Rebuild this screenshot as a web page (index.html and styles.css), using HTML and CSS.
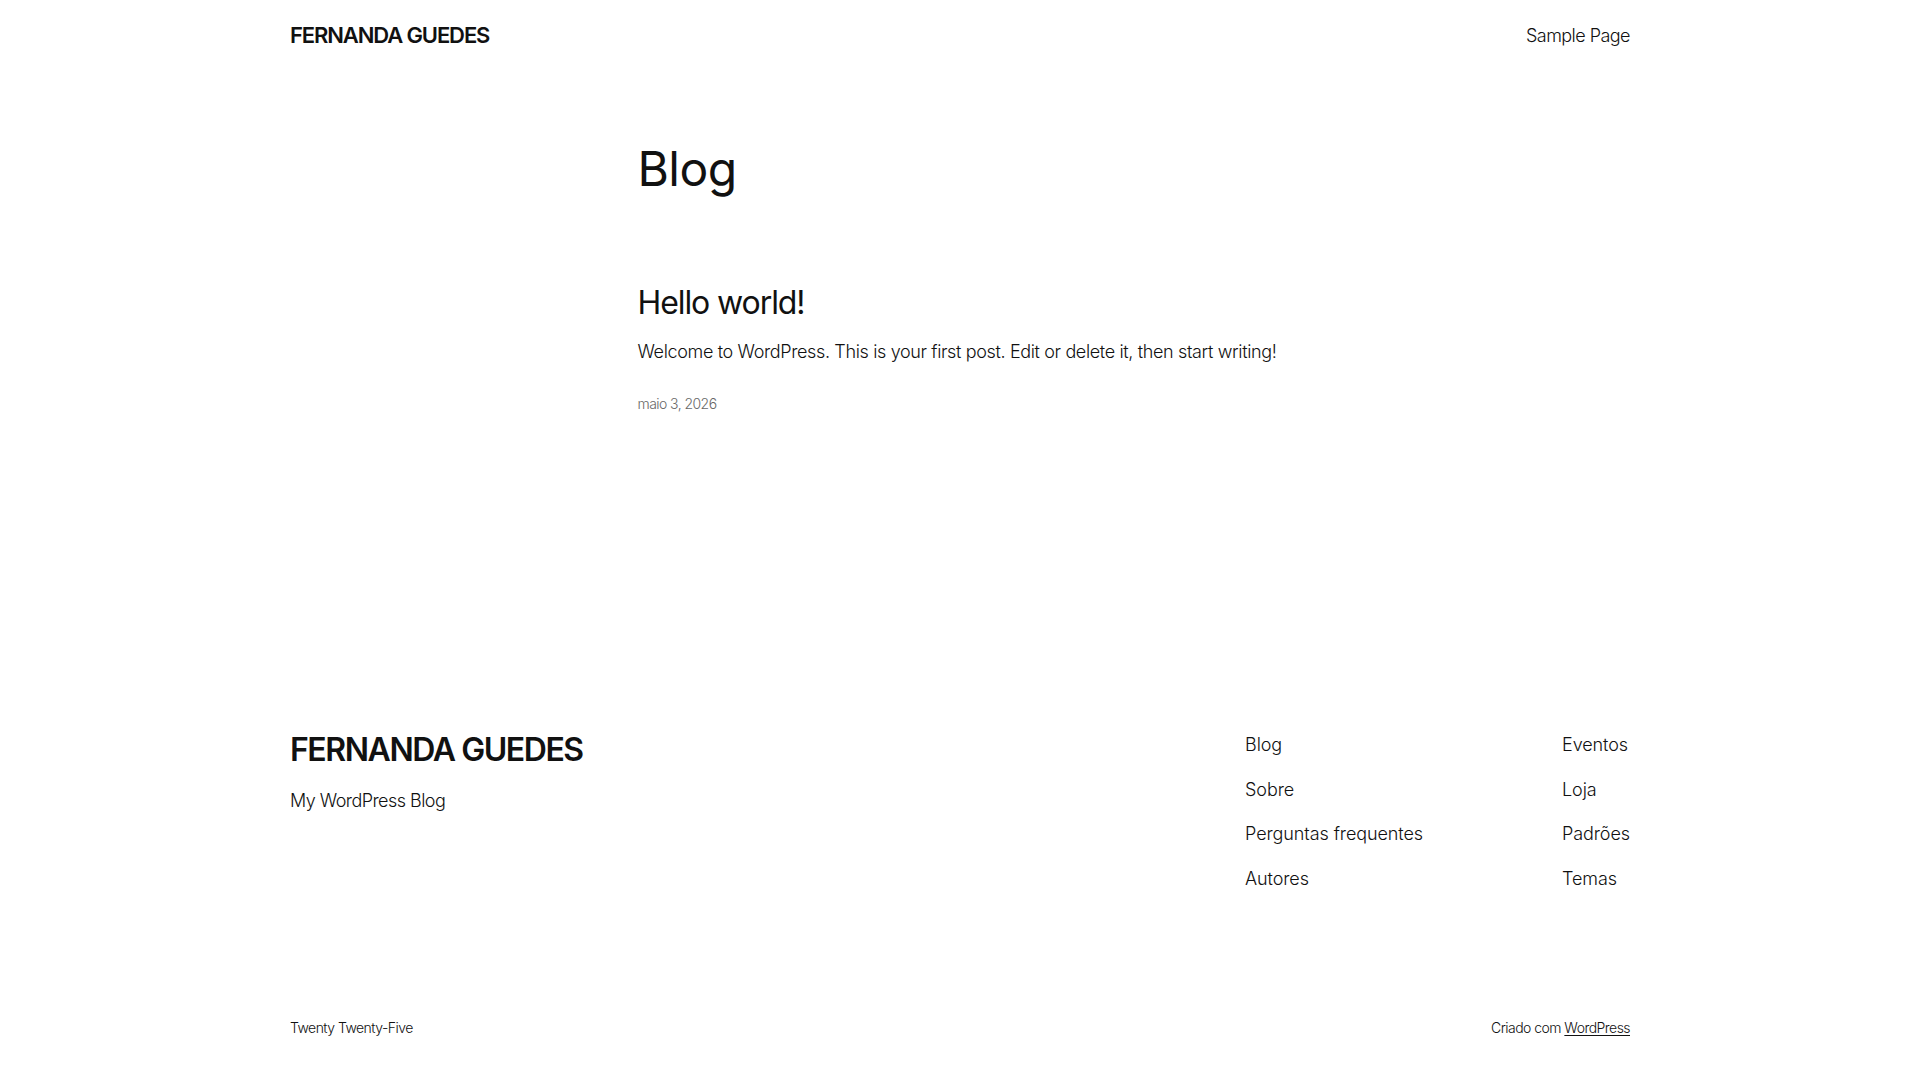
FILE: index.html
```html
<!DOCTYPE html>
<html lang="pt-BR">
<head>
    <meta charset="UTF-8">
    <meta name="viewport" content="width=device-width, initial-scale=1.0">
    <title>Blog – FERNANDA GUEDES</title>
    <link rel="stylesheet" href="styles.css">
</head>
<body>
    <header class="site-header">
        <div class="wrap header-inner">
            <a class="site-title" href="#">FERNANDA GUEDES</a>
            <nav class="header-nav">
                <a href="#">Sample Page</a>
            </nav>
        </div>
    </header>

    <main class="site-main">
        <h1 class="page-title">Blog</h1>

        <article class="post">
            <h2 class="post-title"><a href="#">Hello world!</a></h2>
            <p class="post-excerpt">Welcome to WordPress. This is your first post. Edit or delete it, then start writing!</p>
            <time class="post-date" datetime="2026-05-03">maio 3, 2026</time>
        </article>
    </main>

    <footer class="site-footer">
        <div class="wrap footer-top">
            <div class="footer-brand">
                <a class="footer-title" href="#">FERNANDA GUEDES</a>
                <p class="tagline">My WordPress Blog</p>
            </div>

            <div class="footer-nav">
                <ul class="nav-col nav-col-first">
                    <li><a href="#">Blog</a></li>
                    <li><a href="#">Sobre</a></li>
                    <li><a href="#">Perguntas frequentes</a></li>
                    <li><a href="#">Autores</a></li>
                </ul>
                <ul class="nav-col">
                    <li><a href="#">Eventos</a></li>
                    <li><a href="#">Loja</a></li>
                    <li><a href="#">Padrões</a></li>
                    <li><a href="#">Temas</a></li>
                </ul>
            </div>
        </div>

        <div class="wrap footer-bottom">
            <p>Twenty Twenty-Five</p>
            <p>Criado com <a href="#" class="credit-link">WordPress</a></p>
        </div>
    </footer>
</body>
</html>
```

FILE: styles.css
```css
body {
    margin: 0;
    background: #ffffff;
    color: #111111;
    font-family: 'Inter', 'Noto Sans', sans-serif;
    font-weight: 300;
    font-size: 18px;
    line-height: 1.5;
    letter-spacing: -0.03em;
}

a {
    color: inherit;
    text-decoration: none;
}

p {
    margin: 0;
}

.wrap {
    width: 1340px;
    margin: 0 auto;
}

/* header */
.header-inner {
    height: 70px;
    display: flex;
    align-items: center;
    justify-content: space-between;
}

.site-title {
    font-size: 22px;
    font-weight: 600;
    line-height: 1.2;
    letter-spacing: -0.051em;
}

.header-nav a {
    font-size: 18px;
    font-weight: 300;
}

/* main */
.site-main {
    width: 645px;
    margin: 0 auto;
    padding-top: 70px;
}

.page-title {
    margin: 0;
    font-size: 48px;
    font-weight: 400;
    line-height: 1.2;
}

.post {
    margin-top: 86px;
}

.post-title {
    margin: 0;
    font-size: 32px;
    font-weight: 400;
    line-height: 1.2;
    letter-spacing: -0.034em;
}

.post-excerpt {
    margin-top: 16px;
    letter-spacing: -0.02em;
}

.post-date {
    display: block;
    margin-top: 28px;
    font-size: 14px;
    color: #686868;
    letter-spacing: -0.04em;
}

/* footer */
.footer-top {
    padding-top: 317px;
    display: flex;
    justify-content: space-between;
    align-items: flex-start;
}

.footer-title {
    display: block;
    font-size: 32px;
    font-weight: 600;
    line-height: 1.2;
    letter-spacing: -0.045em;
}

.tagline {
    margin-top: 18px;
}

.footer-nav {
    display: flex;
}

.nav-col {
    list-style: none;
    margin: 0;
    padding: 0;
    display: flex;
    flex-direction: column;
    gap: 17.7px;
    letter-spacing: -0.005em;
}

.nav-col-first {
    width: 317px;
}

.footer-bottom {
    margin-top: 125px;
    display: flex;
    justify-content: space-between;
    font-size: 14px;
    padding-bottom: 40px;
}

.credit-link {
    text-decoration: underline;
    text-underline-offset: 2px;
}
```
